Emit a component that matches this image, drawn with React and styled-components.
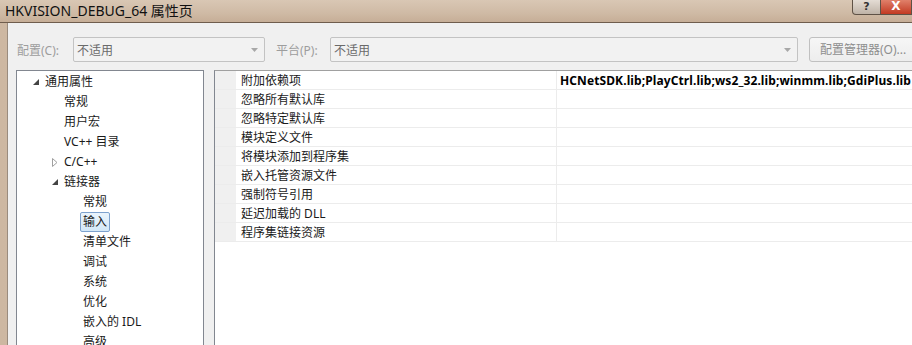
import React from 'react';
import styled, { createGlobalStyle } from 'styled-components';

const GlobalStyle = createGlobalStyle`
  html, body {
    margin: 0;
    padding: 0;
    overflow: hidden;
  }
  body {
    font-family: "Noto Sans", "Noto Sans CJK SC", sans-serif;
    font-size: 12px;
  }
`;

const Window = styled.div`
  width: 912px;
  height: 345px;
  overflow: hidden;
  display: flex;
  flex-direction: column;
  background: linear-gradient(90deg, #cdb7a1 0%, #d4bfaa 40%, #cbb49e 100%);
`;

const TitleBar = styled.div`
  height: 22px;
  flex-shrink: 0;
  display: flex;
  align-items: flex-start;
  background: linear-gradient(180deg, #d9c7b4 0%, #cfbaa5 60%, #c6ae97 100%);
  border-bottom: 1px solid #6f5d4d;
`;

const Caption = styled.div`
  font-family: "Noto Sans", "Noto Sans CJK SC", sans-serif;
  font-size: 14px;
  color: #111;
  padding: 1px 0 0 5px;
  line-height: 20px;
  flex: 1;
`;

const CaptionButton = styled.div`
  height: 14px;
  width: ${p => p.$w}px;
  flex-shrink: 0;
  border: 1px solid #5f5246;
  border-top: none;
  border-left-width: ${p => (p.$first ? 1 : 0)}px;
  border-radius: ${p => (p.$first ? '0 0 0 4px' : '0')};
  background: ${p => p.$bg};
  color: ${p => p.$fg};
  font-family: "DejaVu Sans", sans-serif;
  font-size: ${p => p.$size}px;
  font-weight: bold;
  line-height: 13px;
  text-align: center;
`;

const Body = styled.div`
  flex: 1;
  margin-left: 7px;
  border-left: 1px solid #9a8b7d;
  background: #f0f0f0;
  padding: 14px 0 0 8px;
  display: flex;
  flex-direction: column;
  min-height: 0;
  min-width: 0;
  overflow: hidden;
`;

const Toolbar = styled.div`
  height: 25px;
  flex-shrink: 0;
  display: flex;
  align-items: center;
`;

const Label = styled.span`
  color: #9d9d9d;
  width: ${p => p.$w}px;
  flex-shrink: 0;
  padding-left: 1px;
  white-space: nowrap;
`;

const Combo = styled.div`
  width: ${p => p.$w}px;
  flex-shrink: 0;
  height: 25px;
  box-sizing: border-box;
  border: 1px solid #c3c3c3;
  border-radius: 2px;
  background: #f2f2f2;
  display: flex;
  align-items: center;
  padding: 0 6px 0 3px;
  color: #6a6a6a;
  margin-right: ${p => p.$mr}px;
`;

const ComboText = styled.span`
  flex: 1;
`;

const ConfigButton = styled.div`
  width: 130px;
  flex-shrink: 0;
  height: 25px;
  box-sizing: border-box;
  border: 1px solid #c0c0c0;
  border-radius: 3px;
  background: linear-gradient(180deg, #f6f6f6 0%, #ededed 100%);
  color: #8e8e8e;
  padding-left: 10px;
  line-height: 23px;
  white-space: nowrap;
`;

const Main = styled.div`
  flex: 1;
  display: flex;
  gap: 10px;
  margin-top: 8px;
  min-height: 0;
`;

const Tree = styled.div`
  width: 188px;
  flex-shrink: 0;
  box-sizing: border-box;
  background: #fff;
  border: 1px solid #828790;
  border-bottom: none;
  padding-top: 1px;
`;

const TreeItem = styled.div`
  height: 20px;
  display: flex;
  align-items: center;
  padding-left: ${p => p.$indent}px;
  color: #1a1a1a;
  white-space: nowrap;
`;

const Expander = styled.span`
  width: 12px;
  display: flex;
  align-items: center;
`;

const ItemText = styled.span`
  padding: 0 2px;
  margin-left: -3px;
  height: 18px;
  line-height: 18px;
  border: 1px solid ${p => (p.$selected ? '#7da2ce' : 'transparent')};
  border-radius: 2px;
  background: ${p => (p.$selected ? 'linear-gradient(180deg, #eaf4fc 0%, #d3e8f8 100%)' : 'transparent')};
`;

const Grid = styled.div`
  flex: 1;
  min-width: 0;
  background: #fff;
  border-top: 1px solid #a0a0a0;
  border-left: 1px solid #828790;
`;

const GridRow = styled.div`
  display: flex;
  height: 19px;
  box-sizing: border-box;
  border-bottom: 1px solid #ececec;
`;

const Gutter = styled.div`
  width: 21px;
  flex-shrink: 0;
  background: #f0f0f0;
`;

const NameCell = styled.div`
  width: 315px;
  flex-shrink: 0;
  padding-left: 5px;
  line-height: 20px;
  color: #1a1a1a;
`;

const ValueCell = styled.div`
  flex: 1;
  min-width: 0;
  border-left: 1px solid #ececec;
  padding-left: 3px;
  line-height: 20px;
  font-weight: bold;
  letter-spacing: 0.1px;
  color: #000;
  white-space: nowrap;
  overflow: hidden;
`;

const ArrowDown = () => (
  <svg width="7" height="4" viewBox="0 0 7 4">
    <path d="M0 0 H7 L3.5 4 Z" fill="#a8a8a8" />
  </svg>
);

const Expanded = () => (
  <svg width="6" height="6" viewBox="0 0 6 6">
    <path d="M6 0 V6 H0 Z" fill="#444" />
  </svg>
);

const Collapsed = () => (
  <svg width="6" height="9" viewBox="0 0 6 9">
    <path d="M0.5 0.5 L5 4.5 L0.5 8.5 Z" fill="none" stroke="#a0a0a0" />
  </svg>
);

const treeItems = [
  { text: '通用属性', indent: 16, exp: 'open' },
  { text: '常规', indent: 47 },
  { text: '用户宏', indent: 47 },
  { text: 'VC++ 目录', indent: 47 },
  { text: 'C/C++', indent: 35, exp: 'closed' },
  { text: '链接器', indent: 35, exp: 'open' },
  { text: '常规', indent: 66 },
  { text: '输入', indent: 66, selected: true },
  { text: '清单文件', indent: 66 },
  { text: '调试', indent: 66 },
  { text: '系统', indent: 66 },
  { text: '优化', indent: 66 },
  { text: '嵌入的 IDL', indent: 66 },
  { text: '高级', indent: 66 },
];

const props = [
  ['附加依赖项', 'HCNetSDK.lib;PlayCtrl.lib;ws2_32.lib;winmm.lib;GdiPlus.lib'],
  ['忽略所有默认库', ''],
  ['忽略特定默认库', ''],
  ['模块定义文件', ''],
  ['将模块添加到程序集', ''],
  ['嵌入托管资源文件', ''],
  ['强制符号引用', ''],
  ['延迟加载的 DLL', ''],
  ['程序集链接资源', ''],
];

const App = () => {
  return (
    <Window>
      <GlobalStyle />
      <TitleBar>
        <Caption>HKVISION_DEBUG_64 属性页</Caption>
        <CaptionButton $first $w={27} $bg="linear-gradient(180deg,#e4dcd4,#bfb3a7)" $fg="#333" $size={11}>?</CaptionButton>
        <CaptionButton $w={30} $bg="linear-gradient(180deg,#e0806a,#c23a22)" $fg="#fff" $size={12}>X</CaptionButton>
      </TitleBar>
      <Body>
        <Toolbar>
          <Label $w={56}>配置(C):</Label>
          <Combo $w={192} $mr={10}>
            <ComboText>不适用</ComboText>
            <ArrowDown />
          </Combo>
          <Label $w={54}>平台(P):</Label>
          <Combo $w={468} $mr={11}>
            <ComboText>不适用</ComboText>
            <ArrowDown />
          </Combo>
          <ConfigButton>配置管理器(O)...</ConfigButton>
        </Toolbar>
        <Main>
          <Tree>
            {treeItems.map((it, i) => (
              <TreeItem key={i} $indent={it.indent}>
                {it.exp && (
                  <Expander>{it.exp === 'open' ? <Expanded /> : <Collapsed />}</Expander>
                )}
                <ItemText $selected={it.selected}>{it.text}</ItemText>
              </TreeItem>
            ))}
          </Tree>
          <Grid>
            {props.map(([name, value], i) => (
              <GridRow key={i}>
                <Gutter />
                <NameCell>{name}</NameCell>
                <ValueCell>{value}</ValueCell>
              </GridRow>
            ))}
          </Grid>
        </Main>
      </Body>
    </Window>
  );
};

export default App;
